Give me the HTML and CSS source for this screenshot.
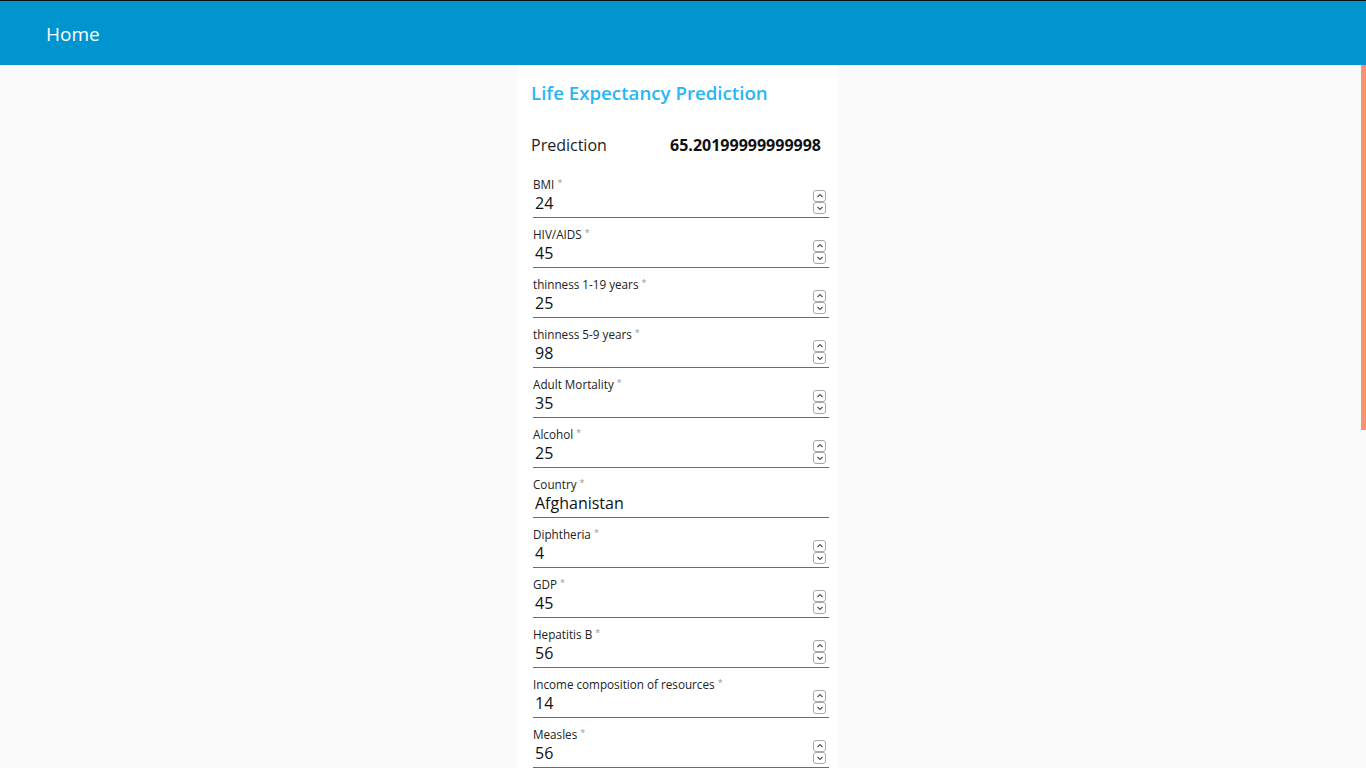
FILE: index.html
```html
<!DOCTYPE html>
<html lang="en">
<head>
<meta charset="utf-8">
<title>Life Expectancy Prediction</title>
<link rel="stylesheet" href="styles.css">
</head>
<body>
<header class="topbar"><span class="brand">Home</span></header>
<main class="content">
  <section class="card">
    <h1 class="title">Life Expectancy Prediction</h1>
    <div class="prediction"><span class="pred-label">Prediction</span><span class="pred-value">65.20199999999998</span></div>
    <form class="form">
      <div class="field"><label class="label">BMI <span class="req">*</span></label><div class="row"><span class="value">24</span><span class="spin"><span class="btn"><svg viewBox="0 0 8 8"><path d="M1.5 5 L4 2.5 L6.5 5"/></svg></span><span class="btn"><svg viewBox="0 0 8 8"><path d="M1.5 3 L4 5.5 L6.5 3"/></svg></span></span></div></div>
      <div class="field"><label class="label">HIV/AIDS <span class="req">*</span></label><div class="row"><span class="value">45</span><span class="spin"><span class="btn"><svg viewBox="0 0 8 8"><path d="M1.5 5 L4 2.5 L6.5 5"/></svg></span><span class="btn"><svg viewBox="0 0 8 8"><path d="M1.5 3 L4 5.5 L6.5 3"/></svg></span></span></div></div>
      <div class="field"><label class="label">thinness 1-19 years <span class="req">*</span></label><div class="row"><span class="value">25</span><span class="spin"><span class="btn"><svg viewBox="0 0 8 8"><path d="M1.5 5 L4 2.5 L6.5 5"/></svg></span><span class="btn"><svg viewBox="0 0 8 8"><path d="M1.5 3 L4 5.5 L6.5 3"/></svg></span></span></div></div>
      <div class="field"><label class="label">thinness 5-9 years <span class="req">*</span></label><div class="row"><span class="value">98</span><span class="spin"><span class="btn"><svg viewBox="0 0 8 8"><path d="M1.5 5 L4 2.5 L6.5 5"/></svg></span><span class="btn"><svg viewBox="0 0 8 8"><path d="M1.5 3 L4 5.5 L6.5 3"/></svg></span></span></div></div>
      <div class="field"><label class="label">Adult Mortality <span class="req">*</span></label><div class="row"><span class="value">35</span><span class="spin"><span class="btn"><svg viewBox="0 0 8 8"><path d="M1.5 5 L4 2.5 L6.5 5"/></svg></span><span class="btn"><svg viewBox="0 0 8 8"><path d="M1.5 3 L4 5.5 L6.5 3"/></svg></span></span></div></div>
      <div class="field"><label class="label">Alcohol <span class="req">*</span></label><div class="row"><span class="value">25</span><span class="spin"><span class="btn"><svg viewBox="0 0 8 8"><path d="M1.5 5 L4 2.5 L6.5 5"/></svg></span><span class="btn"><svg viewBox="0 0 8 8"><path d="M1.5 3 L4 5.5 L6.5 3"/></svg></span></span></div></div>
      <div class="field"><label class="label">Country <span class="req">*</span></label><div class="row"><span class="value">Afghanistan</span></div></div>
      <div class="field"><label class="label">Diphtheria <span class="req">*</span></label><div class="row"><span class="value">4</span><span class="spin"><span class="btn"><svg viewBox="0 0 8 8"><path d="M1.5 5 L4 2.5 L6.5 5"/></svg></span><span class="btn"><svg viewBox="0 0 8 8"><path d="M1.5 3 L4 5.5 L6.5 3"/></svg></span></span></div></div>
      <div class="field"><label class="label">GDP <span class="req">*</span></label><div class="row"><span class="value">45</span><span class="spin"><span class="btn"><svg viewBox="0 0 8 8"><path d="M1.5 5 L4 2.5 L6.5 5"/></svg></span><span class="btn"><svg viewBox="0 0 8 8"><path d="M1.5 3 L4 5.5 L6.5 3"/></svg></span></span></div></div>
      <div class="field"><label class="label">Hepatitis B <span class="req">*</span></label><div class="row"><span class="value">56</span><span class="spin"><span class="btn"><svg viewBox="0 0 8 8"><path d="M1.5 5 L4 2.5 L6.5 5"/></svg></span><span class="btn"><svg viewBox="0 0 8 8"><path d="M1.5 3 L4 5.5 L6.5 3"/></svg></span></span></div></div>
      <div class="field"><label class="label">Income composition of resources <span class="req">*</span></label><div class="row"><span class="value">14</span><span class="spin"><span class="btn"><svg viewBox="0 0 8 8"><path d="M1.5 5 L4 2.5 L6.5 5"/></svg></span><span class="btn"><svg viewBox="0 0 8 8"><path d="M1.5 3 L4 5.5 L6.5 3"/></svg></span></span></div></div>
      <div class="field"><label class="label">Measles <span class="req">*</span></label><div class="row"><span class="value">56</span><span class="spin"><span class="btn"><svg viewBox="0 0 8 8"><path d="M1.5 5 L4 2.5 L6.5 5"/></svg></span><span class="btn"><svg viewBox="0 0 8 8"><path d="M1.5 3 L4 5.5 L6.5 3"/></svg></span></span></div></div>
    </form>
  </section>
</main>
<div class="scroll-thumb"></div>
</body>
</html>
```

FILE: styles.css
```css
html, body {
  margin: 0;
  padding: 0;
  height: 100%;
  overflow: hidden;
}
body {
  background: #fafafa;
  font-family: "Open Sans", "Noto Sans", sans-serif;
  color: #1c1c1c;
}
.topbar {
  height: 64px;
  border-top: 1px solid #111;
  background: #0095cf;
  display: flex;
  align-items: center;
  padding-left: 46px;
}
.brand {
  color: #fff;
  font-size: 19px;
  line-height: 24px;
  padding-top: 2px;
}
.content {
  display: flex;
  justify-content: center;
  padding-right: 10px;
}
.card {
  width: 320px;
  background: #fff;
  padding: 16px 0 40px;
  box-sizing: border-box;
}
.title {
  margin: 0 0 29px 13px;
  font-size: 18.7px;
  line-height: 24px;
  font-weight: 600;
  color: #29b6f6;
}
.prediction {
  display: flex;
  justify-content: space-between;
  align-items: center;
  padding: 0 17px 0 13px;
  height: 22px;
  margin-bottom: 20px;
}
.pred-label {
  font-size: 16px;
}
.pred-value {
  font-size: 16px;
  font-weight: 700;
  color: #111;
}
.form {
  display: flex;
  flex-direction: column;
  padding: 0 9px 0 15px;
}
.field {
  border-bottom: 1px solid #1b86b6;
  margin-bottom: 8px;
  padding-bottom: 4px;
}
.label {
  display: block;
  height: 14px;
  padding-top: 1px;
  font-size: 11.7px;
  line-height: 14px;
  color: #222;
}
.req {
  color: #999;
  font-size: 9px;
  line-height: 1;
  vertical-align: top;
  position: relative;
  top: 1px;
}
.row {
  display: flex;
  align-items: center;
  justify-content: space-between;
  margin-top: 2px;
  height: 20px;
}
.value {
  font-size: 16px;
  line-height: 20px;
  padding-left: 2px;
  color: #111;
}
.spin {
  display: flex;
  flex-direction: column;
  margin-right: 3px;
  margin-top: -2px;
}
.btn {
  width: 11px;
  height: 10px;
  border: 1px solid #a8a8a8;
  border-radius: 3px;
  display: flex;
  align-items: center;
  justify-content: center;
  background: #fff;
}
.btn svg {
  width: 8px;
  height: 8px;
  fill: none;
  stroke: #555;
  stroke-width: 1.2;
}
.scroll-thumb {
  position: fixed;
  right: 0;
  top: 65px;
  width: 5px;
  height: 365px;
  background: #f3956d;
}
```
